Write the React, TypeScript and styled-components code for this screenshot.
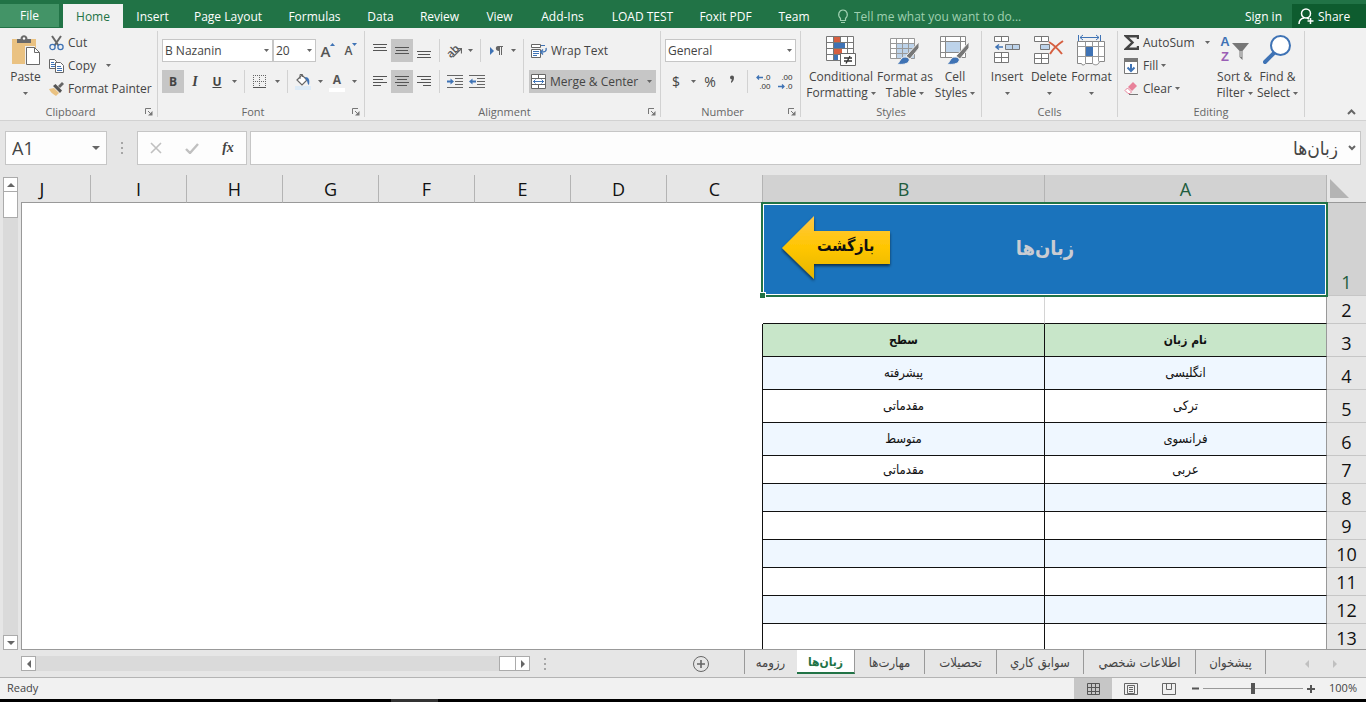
import React from "react";
import styled, { createGlobalStyle, css } from "styled-components";

const uiFont = `"Open Sans", "Noto Sans", sans-serif`;
const faFont = `"DejaVu Sans Condensed", "DejaVu Sans", sans-serif`;

const GlobalStyle = createGlobalStyle`
  *, *::before, *::after { box-sizing: border-box; }
  body { margin: 0; background: #e6e6e6; font-family: ${uiFont}; font-size: 12px; color: #444; }
  button, input, select { font: inherit; color: inherit; margin: 0; }
  button { border: 0; padding: 0; background: none; cursor: pointer; }
`;

const Window = styled.div`
  display: flex;
  flex-direction: column;
  height: 100vh;
  min-width: 1320px;
  overflow: hidden;
`;

/* ---------- Tab strip ---------- */

const TabStrip = styled.header`
  display: flex;
  align-items: stretch;
  height: 28px;
  flex: none;
  padding-top: 4px;
  background: #217346;
  color: #fff;
`;

const FileTab = styled.button`
  width: 59px;
  height: 24px;
  margin-right: 4px;
  background: #439467;
  border-bottom: 1px solid #217346;
`;

const RibbonTab = styled.button<{ $w: number; $active?: boolean }>`
  width: ${(p) => p.$w}px;
  white-space: nowrap;
  ${(p) => p.$active && css`background: #f1f1f1; color: #217346;`}
`;

const TellMe = styled.label`
  display: flex;
  align-items: center;
  gap: 5px;
  flex: 1;
  padding-left: 14px;
  color: #9fd0b0;
`;

const TellMeInput = styled.input`
  width: 200px;
  border: 0;
  padding: 0;
  outline: 0;
  background: none;
  &::placeholder { color: #9fd0b0; opacity: 1; }
`;

const SignIn = styled.a`
  align-self: center;
  color: #fff;
  text-decoration: none;
  margin-right: 10px;
`;

const Share = styled.button`
  display: flex;
  align-items: center;
  gap: 4px;
  width: 74px;
  padding-left: 6px;
  background: #0e5c2f;
`;

/* ---------- Ribbon ---------- */

const Ribbon = styled.section`
  display: flex;
  height: 93px;
  flex: none;
  background: #f1f1f1;
  border-bottom: 1px solid #d2d2d2;
`;

const GroupBox = styled.section<{ $w: number }>`
  display: flex;
  flex-direction: column;
  width: ${(p) => p.$w}px;
  flex: none;
  border-right: 1px solid transparent;
  border-image: linear-gradient(to bottom, transparent 4px, #d2d2d2 4px, #d2d2d2 88px, transparent 88px) 1;
`;

const GroupBody = styled.div`
  display: flex;
  flex: 1;
  padding: 0 4px;
`;

const GroupFoot = styled.footer`
  display: flex;
  align-items: center;
  height: 16px;
  padding: 0 4px;
  color: #666;
`;

const GroupName = styled.h2<{ $launch?: boolean }>`
  flex: 1;
  margin: 0;
  padding-right: ${(p) => (p.$launch ? 8 : 0)}px;
  font-size: 11px;
  font-weight: 400;
  line-height: 16px;
  text-align: center;
`;

const PlainButton = styled.button`
  display: flex;
`;

const Rows = styled.div`
  display: flex;
  flex-direction: column;
  gap: 8px;
  padding-top: 11px;
`;

const Row = styled.div`
  display: flex;
  align-items: stretch;
  height: 23px;
`;

const Tool = styled.button<{ $w?: number; $on?: boolean }>`
  display: flex;
  align-items: center;
  justify-content: center;
  width: ${(p) => p.$w ?? 22}px;
  flex: none;
  background: ${(p) => (p.$on ? "#c6c6c6" : "none")};
`;

const Glyph = styled.span<{ $size?: number; $bold?: boolean }>`
  font-size: ${(p) => p.$size ?? 14}px;
  font-weight: ${(p) => (p.$bold ? 700 : 400)};
  line-height: 20px;
`;

const Italic = styled(Glyph)`
  font-family: "Liberation Serif", serif;
  font-style: italic;
`;

const Underline = styled(Glyph)`
  text-decoration: underline;
`;

const SizeMark = styled.span<{ $size: number }>`
  display: flex;
  align-items: flex-start;
  font-size: ${(p) => p.$size}px;
  font-weight: 600;
  line-height: 20px;
  color: #555;
  svg { margin-top: 2px; }
`;

const InkMark = styled.span`
  display: flex;
  flex-direction: column;
  align-items: center;
  width: 16px;
  font-weight: 700;
  line-height: 17px;
  color: #555;
  border-bottom: 4px solid #fff;
`;

const SlantMark = styled.span`
  display: flex;
  align-items: center;
  font-size: 11px;
  line-height: 16px;
  font-weight: 600;
  color: #555;
  i { font-style: normal; transform: rotate(-45deg); }
  svg { margin: 4px 0 0 -7px; }
`;

const LetterPair = styled.span`
  display: flex;
  flex-direction: column;
  font-family: "Liberation Sans", sans-serif;
  font-size: 13px;
  font-weight: 700;
  line-height: 15px;
  color: #3f73b5;
  span + span { color: #9a5fb5; }
`;

const SortMark = styled.span`
  display: flex;
  align-items: flex-start;
  gap: 2px;
`;

const Divider = styled.span<{ $tall?: boolean }>`
  width: 1px;
  margin: ${(p) => (p.$tall ? "11px 5px 0 4px" : "0 4px")};
  height: ${(p) => (p.$tall ? "54px" : "auto")};
  background: #d2d2d2;
`;

const SelectBox = styled.span<{ $w: number }>`
  position: relative;
  width: ${(p) => p.$w}px;
  svg { position: absolute; right: 4px; top: 10px; pointer-events: none; }
  & + & select { border-left: 0; }
`;

const Select = styled.select`
  appearance: none;
  width: 100%;
  height: 23px;
  padding: 0 14px 0 2px;
  border: 1px solid #c6c6c6;
  border-radius: 0;
  background: #fff;
`;

const LabelTool = styled.button<{ $on?: boolean }>`
  display: flex;
  align-items: center;
  gap: 4px;
  width: 127px;
  height: 23px;
  padding-left: 2px;
  white-space: nowrap;
  background: ${(p) => (p.$on ? "#c6c6c6" : "none")};
  svg:last-child:not(:first-child) { margin-left: auto; margin-right: 4px; }
`;

const SmallStack = styled.div<{ $w?: number }>`
  display: flex;
  flex-direction: column;
  width: ${(p) => (p.$w ? `${p.$w}px` : "auto")};
  padding: 3px 0 0 2px;
`;

const SmallTool = styled.button<{ $gap?: number }>`
  display: flex;
  align-items: center;
  height: 23px;
  white-space: nowrap;
  svg:first-child { margin-right: 4px; }
  svg:last-child:not(:first-child) { margin-left: ${(p) => p.$gap ?? 3}px; }
`;

const BigButton = styled.button<{ $w: number }>`
  display: flex;
  flex-direction: column;
  align-items: center;
  width: ${(p) => p.$w}px;
  padding-top: 6px;
  line-height: 16px;
  white-space: nowrap;
`;

const BigIcon = styled.span`
  display: flex;
  height: 35px;
`;

const BigLine = styled.span`
  display: flex;
  align-items: center;
  gap: 3px;
  height: 16px;
`;

const RibbonEnd = styled.div`
  display: flex;
  flex: 1;
  align-items: flex-end;
  justify-content: flex-end;
  padding: 0 10px 5px 0;
`;

/* ---------- Formula bar ---------- */

const FormulaBar = styled.div`
  display: flex;
  height: 54px;
  flex: none;
  padding: 10px 5px;
`;

const NameBox = styled.label`
  display: flex;
  align-items: center;
  width: 102px;
  padding-right: 6px;
  border: 1px solid #c6c6c6;
  background: #fdfdfd;
`;

const NameInput = styled.input`
  flex: 1;
  min-width: 0;
  border: 0;
  padding: 0 6px;
  background: none;
  font-size: 18px;
`;

const Dots = styled.span`
  display: flex;
  flex-direction: column;
  justify-content: center;
  align-items: center;
  gap: 3px;
  width: 30px;
  i { width: 2px; height: 2px; background: #a6a6a6; }
`;

const FormulaActions = styled.div`
  display: flex;
  width: 110px;
  margin-right: 3px;
  border: 1px solid #c6c6c6;
  background: #fdfdfd;
`;

const FormulaField = styled.label`
  display: flex;
  flex: 1;
  align-items: center;
  padding-right: 4px;
  border: 1px solid #c6c6c6;
  background: #fdfdfd;
`;

const FormulaInput = styled.input`
  flex: 1;
  border: 0;
  padding: 0 10px;
  background: none;
  font-family: ${faFont};
  font-size: 19px;
`;

/* ---------- Sheet ---------- */

const SheetArea = styled.main`
  display: flex;
  flex: 1 1 0;
  min-height: 0;
`;

const VScroll = styled.div`
  display: flex;
  flex-direction: column;
  width: 15px;
  margin: 2px 3px 0;
  background: #dadada;
`;

const ScrollButton = styled.button`
  display: flex;
  align-items: center;
  justify-content: center;
  width: 15px;
  height: 15px;
  border: 1px solid #ababab;
  background: #fff;
`;

const VThumb = styled.div`
  height: 27px;
  margin-top: -1px;
  border: 1px solid #ababab;
  background: #fff;
`;

const Spring = styled.span`
  flex: 1;
`;

const SheetClip = styled.div`
  flex: 1;
  min-width: 0;
  overflow: hidden;
  border-bottom: 1px solid #999;
`;

const Sheet = styled.table`
  width: 100%;
  table-layout: fixed;
  border-collapse: separate;
  border-spacing: 0;
`;

const Corner = styled.th`
  padding: 0;
  border-bottom: 1px solid #999;
  vertical-align: middle;
  svg { display: block; margin-right: 16px; }
`;

const ColHead = styled.th<{ $selected?: boolean }>`
  height: 28px;
  padding: 0;
  overflow: hidden;
  border-right: 1px solid #b4b4b4;
  border-bottom: 1px solid #999;
  font-size: 18px;
  font-weight: 400;
  line-height: 26px;
  color: ${(p) => (p.$selected ? "#215c3e" : "#111")};
  background: ${(p) => (p.$selected ? "#d2d2d2" : "#e6e6e6")};
`;

const ClippedLetter = styled.span`
  display: block;
  width: 96px;
  text-align: center;
`;

const RowHead = styled.th<{ $selected?: boolean }>`
  padding: 0 0 1px;
  border-bottom: 1px solid #c6c6c6;
  font-size: 18px;
  font-weight: 400;
  line-height: 24px;
  vertical-align: bottom;
  text-align: center;
  color: ${(p) => (p.$selected ? "#215c3e" : "#111")};
  background: ${(p) => (p.$selected ? "#d2d2d2" : "#e6e6e6")};
`;

const SheetRow = styled.tr<{ $h: number }>`
  height: ${(p) => p.$h}px;
`;

const edge = "1px solid #111";

const Cell = styled.td<{ $tone: "head" | "odd" | "plain" | "none"; $first?: boolean }>`
  padding: 0;
  font-family: ${faFont};
  font-size: ${(p) => (p.$tone === "head" ? 12 : 13)}px;
  line-height: 20px;
  font-weight: ${(p) => (p.$tone === "head" ? 700 : 400)};
  text-align: center;
  vertical-align: middle;
  color: #111;
  border-bottom: ${edge};
  border-right: ${(p) => (p.$first ? "1px solid #999" : p.$tone === "none" ? "1px solid #d4d4d4" : edge)};
  background: ${(p) => ({ head: "#c8e6c9", odd: "#eff7ff", plain: "#fff", none: "#fff" })[p.$tone]};
`;

const BlankCell = styled.td<{ $edge?: boolean }>`
  padding: 0;
  background: #fff;
  border-left: 1px solid #999;
  border-right: 1px solid ${(p) => (p.$edge ? "#111" : "#fff")};
`;

const TitleCell = styled.td`
  position: relative;
  padding: 0 0 4px;
  background: #1a73bc;
  color: #c9ccd2;
  font-family: ${faFont};
  font-size: 20px;
  font-weight: 700;
  text-align: center;
`;

const Selection = styled.span`
  position: absolute;
  inset: -1px -1px -1px -2px;
  border: 2px solid #217346;
  box-shadow: inset 0 0 0 1px #fff;
  pointer-events: none;
  &::after {
    content: "";
    position: absolute;
    left: -4px;
    bottom: -4px;
    width: 7px;
    height: 7px;
    border: 1px solid #fff;
    background: #217346;
  }
`;

const BackShape = styled.a`
  position: absolute;
  left: 18px;
  top: 10px;
  width: 112px;
  height: 72px;
  color: #111;
  svg { position: absolute; left: 0; top: 0; }
  span {
    position: absolute;
    left: 36px;
    top: 22px;
    font-size: 16px;
    line-height: 22px;
  }
`;

/* ---------- Sheet tabs ---------- */

const SheetBar = styled.nav`
  display: flex;
  height: 28px;
  flex: none;
  border-bottom: 1px solid #b4b4b4;
`;

const HScroll = styled.div`
  display: flex;
  flex: 1;
  height: 15px;
  margin: 6px 0 0 21px;
  background: #dadada;
`;

const HThumb = styled.div`
  width: 17px;
  margin-right: -1px;
  border: 1px solid #ababab;
  background: #fff;
`;

const AddSheet = styled.button`
  display: flex;
  align-items: center;
  margin: 0 34px 0 132px;
`;

const SheetTabs = styled.div`
  display: flex;
  flex-direction: row-reverse;
  border-left: 1px solid #999;
  height: 24px;
`;

const SheetTab = styled.button<{ $w: number; $active?: boolean; $bare?: boolean }>`
  width: ${(p) => p.$w}px;
  height: 24px;
  padding-top: 2px;
  font-family: ${faFont};
  font-size: 13px;
  line-height: 20px;
  white-space: nowrap;
  border-right: 1px solid ${(p) => (p.$bare ? "transparent" : "#999")};
  ${(p) =>
    p.$active &&
    css`
      background: #fff;
      color: #217346;
      font-weight: 700;
      font-size: 12px;
      border-bottom: 2px solid #217346;
    `}
`;

const TabNav = styled.div`
  display: flex;
  width: 100px;
  padding-left: 27px;
`;

/* ---------- Status bar ---------- */

const StatusBar = styled.footer`
  display: flex;
  align-items: stretch;
  height: 21px;
  flex: none;
  padding: 0 9px 0 7px;
  background: #f1f1f1;
  font-size: 11px;
  line-height: 20px;
`;

const Zoom = styled.input`
  appearance: none;
  align-self: center;
  width: 100px;
  height: 11px;
  background: linear-gradient(#999, #999) center / 100% 1px no-repeat;
  &::-webkit-slider-thumb {
    appearance: none;
    width: 4px;
    height: 11px;
    background: #555;
  }
`;

const ZoomValue = styled.output`
  width: 38px;
  text-align: right;
`;

const Taskbar = styled.div`
  height: 3px;
  flex: none;
  padding-left: 391px;
  background: #000;
  &::before { content: ""; display: block; width: 47px; height: 3px; background: #333; }
`;

/* ---------- Icons ---------- */

type IconProps = { w: number; h: number; children: React.ReactNode };
const Icon = ({ w, h, children }: IconProps) => (
  <svg width={w} height={h} viewBox={`0 0 ${w} ${h}`} fill="none" aria-hidden="true">
    {children}
  </svg>
);

const Caret = () => (
  <Icon w={5} h={3}><path d="M0 0h5L2.5 3z" fill="#666" /></Icon>
);

const CaretTool = ({ label }: { label: string }) => (
  <Tool $w={12} aria-label={label}><Caret /></Tool>
);

const Lines = ({ rows, w = 14, h = 14 }: { rows: [number, number, number][]; w?: number; h?: number }) => (
  <Icon w={w} h={h}>
    {rows.map(([x, y, len]) => <rect key={y} x={x} y={y} width={len} height="1" fill="#555" />)}
  </Icon>
);

const PasteIcon = () => (
  <Icon w={30} h={32}>
    <path d="M1 5h24v25H1z" fill="#eac282" />
    <path d="M6 9V5h3.500c0-5 7-5 7 0H20v4z" fill="#6a6a6a" />
    <circle cx="13" cy="4.500" r="1.200" fill="#fff" />
    <path d="M14 12h10v2l5 5v12H14z" fill="#f1f1f1" />
    <path d="M15.500 13.500h8l5 5v12h-13z" fill="#fff" stroke="#6a6a6a" />
    <path d="M23.500 13.500v5h5" stroke="#6a6a6a" />
  </Icon>
);

const CutIcon = () => (
  <Icon w={15} h={16}>
    <path d="M3 1l6.500 9.500M12 1L5.500 10.500" stroke="#666" strokeWidth="2" />
    <circle cx="3.500" cy="12" r="2.600" stroke="#3f73b5" strokeWidth="1.300" />
    <circle cx="11.500" cy="12" r="2.600" stroke="#3f73b5" strokeWidth="1.300" />
  </Icon>
);

const CopyIcon = () => (
  <Icon w={15} h={14}>
    <path d="M.5.5h5l2 2v7h-7z" fill="#fff" stroke="#666" />
    <path d="M2 3.500h3M2 5.500h4M2 7.500h4" stroke="#3f73b5" />
    <path d="M6.500 3.500h5l3 3v7h-8z" fill="#fff" stroke="#666" />
    <path d="M8 7.500h4M8 9.500h5M8 11.500h5" stroke="#3f73b5" />
  </Icon>
);

const PainterIcon = () => (
  <Icon w={15} h={14}>
    <path d="M0 7l5-1 5 5-3 3C4 12 1 10 0 7z" fill="#eac282" />
    <path d="M4 4l2.500-2 6.500 6.500-2 2.500z" fill="#555" />
    <path d="M9 4l4-4 2 2-4 4z" fill="#666" />
  </Icon>
);

const LauncherIcon = () => (
  <Icon w={8} h={8}>
    <path d="M.5 6V.5H6M3 3l3 3" stroke="#777" />
    <path d="M7.500 3v4.500H3z" fill="#777" />
  </Icon>
);

const SizeIcon = ({ up }: { up?: boolean }) => (
  <SizeMark $size={up ? 15 : 12}>
    A
    <Icon w={5} h={3}><path d={up ? "M0 3l2.500-3L5 3z" : "M0 0h5L2.500 3z"} fill="#3f73b5" /></Icon>
  </SizeMark>
);

const BorderIcon = () => (
  <Icon w={14} h={14}>
    <path d="M.5 0v13M6.500 0v13M12.500 0v13M0 .5h13M0 6.500h13" stroke="#666" strokeDasharray="1 1" />
    <path d="M0 12.500h13" stroke="#555" />
  </Icon>
);

const FillIcon = () => (
  <Icon w={16} h={17}>
    <rect y="13" width="16" height="4" fill="#ddebf7" />
    <path d="M2 7l5-5 5 5-5 5z" fill="#fff" stroke="#666" strokeWidth="1.200" />
    <path d="M5 6V1.500h2.500V4" stroke="#666" />
    <path d="M10 4c4 0 5 3 4 8-2-1-1-4-3-5z" fill="#3f73b5" />
  </Icon>
);

const OrientIcon = () => (
  <SlantMark>
    <i>ab</i>
    <Icon w={10} h={11}><path d="M1 10l8-8M4.500 1.500h5v5" stroke="#666" strokeWidth="1.200" /></Icon>
  </SlantMark>
);

const DirectionIcon = () => (
  <Icon w={13} h={10}>
    <path d="M0 1l4 4-4 4z" fill="#3f73b5" />
    <path d="M8 0h5v1h-1v8h-1V1h-1v8H9V5C5 5 5 0 8 0z" fill="#666" />
  </Icon>
);

const IndentIcon = ({ out }: { out?: boolean }) => (
  <Icon w={16} h={14}>
    <path d="M0 .5h16M8 3.500h8M8 6.500h8M8 9.500h8M0 12.500h16" stroke="#666" />
    <path d={out ? "M0 6.500l3.500-3v2H7v2H3.500v2z" : "M7 6.500l-3.500-3v2H0v2h3.500v2z"} fill="#3f73b5" />
  </Icon>
);

const WrapIcon = () => (
  <Icon w={16} h={16}>
    <path d="M.5 1.500h9v3h-9zM.5 6.500h9v8h-9z" fill="#fff" stroke="#666" />
    <path d="M10 2.500h4M2 8.500h6M2 10.500h6M2 12.500h4" stroke="#3f73b5" />
    <path d="M15 5c1 4-2 4-5 4m2-2.500L9.500 9l2.500 2.500" stroke="#3f73b5" strokeWidth="1.300" />
  </Icon>
);

const MergeIcon = () => (
  <Icon w={15} h={15}>
    <path d="M.5.5h14v14H.5zM.5 4.500h14M.5 10.500h14M7.500.5v4M7.500 10.500v4" fill="#fff" stroke="#666" />
    <path d="M2 7.500h11M4.500 5.500l-2 2 2 2M10.500 5.500l2 2-2 2" stroke="#3f73b5" />
  </Icon>
);

const Decimals = styled.span<{ $right?: boolean }>`
  display: grid;
  grid-template-columns: 1fr auto;
  width: 15px;
  font-family: "Liberation Sans", sans-serif;
  font-size: 8px;
  line-height: 9px;
  color: #333;
  text-align: right;
  svg { align-self: center; grid-row: ${(p) => (p.$right ? 2 : 1)}; grid-column: 1; }
  span { grid-column: 1 / -1; }
  svg + span { grid-column: 2; }
`;

const ShortArrow = ({ right }: { right?: boolean }) => (
  <Icon w={7} h={5}>
    <path d={right ? "M0 2.500h6M4 .5l2 2-2 2" : "M7 2.500H1M3 .5l-2 2 2 2"} stroke="#3f73b5" strokeWidth="1.300" />
  </Icon>
);

const ConditionalIcon = () => (
  <Icon w={31} h={32}>
    <path d="M.5 2.500h27v24H.5z" fill="#fff" />
    <path d="M8 3h6v5H8zM8 15h8v5H8z" fill="#d65f40" />
    <path d="M8 9h11v5H8zM8 21h4v5H8z" fill="#3f73b5" />
    <path d="M.5 2.500h27v24H.5zM7.500 2.500v24M14.500 2.500v6M21.500 2.500v24M.5 8.500h27M.5 14.500h27M.5 20.500h27" stroke="#777" />
    <path d="M14.500 19.500h15v12h-15z" fill="#fff" stroke="#666" />
    <path d="M18 24h8M18 27h8M24 22l-4 7.500" stroke="#333" strokeWidth="1.300" />
  </Icon>
);

const Brush = () => (
  <>
    <path d="M7 30c3-1 3-7 8-7 3 0 5 2 4 4-1 3-7 4-12 3z" fill="#3f73b5" stroke="#f1f1f1" />
    <path d="M16 22L29 8v6l-9 11z" fill="#777" stroke="#f1f1f1" />
  </>
);

const FormatTableIcon = () => (
  <Icon w={30} h={32}>
    <path d="M.5 4.500h24v20H.5z" fill="#fff" />
    <path d="M7 10h18v15H7z" fill="#bdd3ea" />
    <path d="M.5 4.500h24v20H.5zM6.500 4.500v20M12.500 4.500v20M18.500 4.500v20M.5 9.500h24M.5 14.500h24M.5 19.500h24" stroke="#999" />
    <Brush />
  </Icon>
);

const CellStylesIcon = () => (
  <Icon w={30} h={32}>
    <path d="M.5 2.500h25v21H.5zM5.500 2.500v21M20.500 2.500v21M.5 7.500h25M.5 18.500h25" fill="#fff" stroke="#888" />
    <path d="M6 8h14v10H6z" fill="#bdd3ea" />
    <Brush />
  </Icon>
);

const InsertIcon = () => (
  <Icon w={27} h={32}>
    <path d="M.5 2.500h14v5H.5zM7.500 2.500v5M.5 18.500h14v10H.5zM7.500 18.500v10M.5 23.500h14" fill="#fff" stroke="#777" />
    <path d="M11.500 10.500h14v5h-14zM18.500 10.500v5" fill="#bdd3ea" stroke="#777" />
    <path d="M9 13H2M5 10.500L2 13l3 2.500" stroke="#3f73b5" strokeWidth="1.500" />
  </Icon>
);

const DeleteIcon = () => (
  <Icon w={30} h={32}>
    <path d="M.5 2.500h14v5H.5zM7.500 2.500v5M.5 19.500h14v10H.5zM7.500 19.500v10M.5 24.500h14" fill="#fff" stroke="#777" />
    <path d="M6.500 10.500h9v5h-9z" fill="#bdd3ea" stroke="#777" />
    <path d="M15 8c5 3 9 7 13 12M29 7c-6 4-10 8-13 13" stroke="#d65f40" strokeWidth="2" />
  </Icon>
);

const FormatCellsIcon = () => (
  <Icon w={29} h={32}>
    <path d="M1.500 1v6M23.500 1v6M3 3.500h19M6 1L3 3.500 6 6M19 1l3 2.500L19 6" stroke="#3f73b5" />
    <path d="M.5 7.500h27v20h-5c-1 4-5 4-7 2h-7c-1 2-4 2-4 0h-4z" fill="#fff" stroke="#888" />
    <path d="M8.500 7.500v22M15.500 7.500v22M21.500 7.500v20M.5 12.500h27M.5 22.500h27" stroke="#999" />
    <path d="M9 13h7v9H9z" fill="#3f73b5" />
  </Icon>
);

const SumIcon = () => (
  <Icon w={15} h={15}>
    <path d="M14 4V1.200H2L8.500 7.500 2 13.800h12V11" stroke="#444" strokeWidth="2.400" />
  </Icon>
);

const FillDownIcon = () => (
  <Icon w={15} h={16}>
    <path d="M.5.5h13v15H.5z" fill="#fff" stroke="#777" />
    <path d="M0 0h14v4H0z" fill="#777" />
    <path d="M7 6v7M3.500 9.500L7 13l3.500-3.500" stroke="#3f73b5" strokeWidth="2" />
  </Icon>
);

const EraserIcon = () => (
  <Icon w={15} h={13}>
    <path d="M4 5l5-5 4 4-5 5z" fill="#e8829a" />
    <path d="M3.500 6L1 8.500 4 11.500h2L7.500 10z" fill="#fff" stroke="#e8829a" />
    <path d="M5 12.500h9" stroke="#777" />
  </Icon>
);

const SortIcon = () => (
  <SortMark>
    <LetterPair><span>A</span><span>Z</span></LetterPair>
    <Icon w={17} h={28}>
      <path d="M0 9h17l-6.500 8v9l-3-3v-6z" fill="#777" />
      <path d="M8.500 17h1v6h-1z" fill="#eee" />
    </Icon>
  </SortMark>
);

const FindIcon = () => (
  <Icon w={29} h={32}>
    <path d="M2 28l10-10" stroke="#3f73b5" strokeWidth="4" strokeLinecap="round" />
    <circle cx="17.500" cy="11.500" r="9.500" fill="#fff" stroke="#3f73b5" strokeWidth="2" />
  </Icon>
);

const Tri = ({ d, w = 7, h = 7, color = "#666" }: { d: string; w?: number; h?: number; color?: string }) => (
  <Icon w={w} h={h}><path d={d} fill={color} /></Icon>
);

/* ---------- Data ---------- */

const ribbonTabs: [string, number][] = [
  ["Insert", 59], ["Page Layout", 92], ["Formulas", 81], ["Data", 51], ["Review", 67],
  ["View", 53], ["Add-Ins", 73], ["LOAD TEST", 87], ["Foxit PDF", 79], ["Team", 58],
];

type Tone = "head" | "odd" | "plain" | "none";
const rows: { n: number; h: number; tone: Tone; a?: string; b?: string }[] = [
  { n: 2, h: 28, tone: "none" },
  { n: 3, h: 33, tone: "head", a: "نام زبان", b: "سطح" },
  { n: 4, h: 33, tone: "odd", a: "انگلیسی", b: "پیشرفته" },
  { n: 5, h: 33, tone: "plain", a: "ترکی", b: "مقدماتی" },
  { n: 6, h: 33, tone: "odd", a: "فرانسوی", b: "متوسط" },
  { n: 7, h: 28, tone: "plain", a: "عربی", b: "مقدماتی" },
  { n: 8, h: 28, tone: "odd" },
  { n: 9, h: 28, tone: "plain" },
  { n: 10, h: 28, tone: "odd" },
  { n: 11, h: 28, tone: "plain" },
  { n: 12, h: 28, tone: "odd" },
  { n: 13, h: 28, tone: "plain" },
];

const languages = "زبان\u200cها";

const sheetTabs: { name: string; w: number; active?: boolean; bare?: boolean }[] = [
  { name: "پیشخوان", w: 70 },
  { name: "اطلاعات شخصي", w: 112 },
  { name: "سوابق كاري", w: 87 },
  { name: "تحصيلات", w: 72 },
  { name: "مهارت\u200cها", w: 70 },
  { name: languages, w: 58, active: true },
  { name: "رزومه", w: 52, bare: true },
];

const Group = ({ name, w, launch, children }: { name: string; w: number; launch?: boolean; children: React.ReactNode }) => (
  <GroupBox $w={w} aria-label={name}>
    <GroupBody>{children}</GroupBody>
    <GroupFoot>
      <GroupName $launch={launch}>{name}</GroupName>
      {launch && <PlainButton aria-label={`${name} settings`}><LauncherIcon /></PlainButton>}
    </GroupFoot>
  </GroupBox>
);

const Big = ({ w, icon, top, bottom }: { w: number; icon: React.ReactNode; top: string; bottom?: string }) => (
  <BigButton $w={w}>
    <BigIcon>{icon}</BigIcon>
    <BigLine>{top}</BigLine>
    <BigLine>{bottom}<Caret /></BigLine>
  </BigButton>
);

const DotColumn = () => <Dots><i /><i /><i /></Dots>;

export default function App() {
  return (
    <Window>
      <GlobalStyle />
      <TabStrip>
        <FileTab>File</FileTab>
        <RibbonTab $w={60} $active>Home</RibbonTab>
        {ribbonTabs.map(([name, w]) => <RibbonTab key={name} $w={w}>{name}</RibbonTab>)}
        <TellMe>
          <Icon w={12} h={15}>
            <path d="M3.500 9.500C0 6 2 1 6 1s6 5 2.500 8.500v2h-5zM4 13.500h4" stroke="#9fd0b0" strokeWidth="1.200" />
          </Icon>
          <TellMeInput aria-label="Tell me" placeholder="Tell me what you want to do..." />
        </TellMe>
        <SignIn href="#signin">Sign in</SignIn>
        <Share>
          <Icon w={16} h={17}>
            <circle cx="8" cy="5.500" r="4.500" stroke="#fff" strokeWidth="1.500" />
            <path d="M1 16c0-3 2-5.500 5-6M9 10l2 1M12.500 10v6M9.500 13h6" stroke="#fff" strokeWidth="1.500" />
          </Icon>
          Share
        </Share>
      </TabStrip>

      <Ribbon>
        <Group name="Clipboard" w={158} launch>
          <Big w={43} icon={<PasteIcon />} top="Paste" />
          <SmallStack>
            <SmallTool><CutIcon />Cut</SmallTool>
            <SmallTool $gap={10}><CopyIcon />Copy<Caret /></SmallTool>
            <SmallTool><PainterIcon />Format Painter</SmallTool>
          </SmallStack>
        </Group>

        <Group name="Font" w={207} launch>
          <Rows>
            <Row>
              <SelectBox $w={111}>
                <Select aria-label="Font"><option>B Nazanin</option></Select><Caret />
              </SelectBox>
              <SelectBox $w={43}>
                <Select aria-label="Font size"><option>20</option></Select><Caret />
              </SelectBox>
              <Tool $w={24} aria-label="Increase font size"><SizeIcon up /></Tool>
              <Tool aria-label="Decrease font size"><SizeIcon /></Tool>
            </Row>
            <Row>
              <Tool $on><Glyph $bold $size={12}>B</Glyph></Tool>
              <Tool><Italic $bold>I</Italic></Tool>
              <Tool><Underline $bold $size={12}>U</Underline></Tool>
              <CaretTool label="Underline styles" />
              <Divider />
              <Tool aria-label="Borders"><BorderIcon /></Tool>
              <CaretTool label="Border styles" />
              <Divider />
              <Tool aria-label="Fill color"><FillIcon /></Tool>
              <CaretTool label="Fill colors" />
              <Tool aria-label="Font color"><InkMark>A</InkMark></Tool>
              <CaretTool label="Font colors" />
            </Row>
          </Rows>
        </Group>

        <Group name="Alignment" w={296} launch>
          <Rows>
            <Row>
              <Tool aria-label="Top align"><Lines rows={[[0, 0, 14], [1, 3, 12], [0, 6, 14]]} /></Tool>
              <Tool $on aria-label="Middle align"><Lines rows={[[0, 3, 14], [1, 6, 12], [0, 9, 14]]} /></Tool>
              <Tool aria-label="Bottom align"><Lines rows={[[0, 7, 14], [1, 10, 12], [0, 13, 14]]} /></Tool>
              <Divider />
              <Tool $w={20} aria-label="Orientation"><OrientIcon /></Tool>
              <CaretTool label="Orientations" />
              <Divider />
              <Tool aria-label="Text direction"><DirectionIcon /></Tool>
              <CaretTool label="Text directions" />
            </Row>
            <Row>
              <Tool aria-label="Align left"><Lines rows={[[0, 1, 14], [0, 4, 10], [0, 7, 14], [0, 10, 8]]} /></Tool>
              <Tool $on aria-label="Center"><Lines rows={[[0, 1, 14], [2, 4, 10], [0, 7, 14], [2, 10, 10]]} /></Tool>
              <Tool aria-label="Align right"><Lines rows={[[0, 1, 14], [4, 4, 10], [0, 7, 14], [6, 10, 8]]} /></Tool>
              <Divider />
              <Tool aria-label="Increase indent"><IndentIcon /></Tool>
              <Tool aria-label="Decrease indent"><IndentIcon out /></Tool>
            </Row>
          </Rows>
          <Divider $tall />
          <Rows>
            <LabelTool><WrapIcon />Wrap Text</LabelTool>
            <LabelTool $on><MergeIcon />Merge &amp; Center<Caret /></LabelTool>
          </Rows>
        </Group>

        <Group name="Number" w={140} launch>
          <Rows>
            <Row>
              <SelectBox $w={131}>
                <Select aria-label="Number format"><option>General</option></Select><Caret />
              </SelectBox>
            </Row>
            <Row>
              <Tool><Glyph $size={14}>$</Glyph></Tool>
              <CaretTool label="Currencies" />
              <Tool><Glyph $size={14}>%</Glyph></Tool>
              <Tool aria-label="Comma style">
                <Icon w={5} h={14}><path d="M0 2.500a2 2 0 1 1 4 0C4 5 3 7 1 8V6.500L2 4.500C1 4.500 0 3.500 0 2.500z" fill="#555" /></Icon>
              </Tool>
              <Divider />
              <Tool aria-label="Increase decimal"><Decimals><ShortArrow /><span>.0</span><span>.00</span></Decimals></Tool>
              <Tool aria-label="Decrease decimal"><Decimals $right><span>.00</span><ShortArrow right /><span>.0</span></Decimals></Tool>
            </Row>
          </Rows>
        </Group>

        <Group name="Styles" w={181}>
          <Big w={72} icon={<ConditionalIcon />} top="Conditional" bottom="Formatting" />
          <Big w={56} icon={<FormatTableIcon />} top="Format as" bottom="Table" />
          <Big w={44} icon={<CellStylesIcon />} top="Cell" bottom="Styles" />
        </Group>

        <Group name="Cells" w={136}>
          <Big w={42} icon={<InsertIcon />} top="Insert" />
          <Big w={42} icon={<DeleteIcon />} top="Delete" />
          <Big w={43} icon={<FormatCellsIcon />} top="Format" />
        </Group>

        <Group name="Editing" w={187}>
          <SmallStack $w={91}>
            <SmallTool $gap={10}><SumIcon />AutoSum<Caret /></SmallTool>
            <SmallTool><FillDownIcon />Fill<Caret /></SmallTool>
            <SmallTool><EraserIcon />Clear<Caret /></SmallTool>
          </SmallStack>
          <Big w={43} icon={<SortIcon />} top="Sort &" bottom="Filter" />
          <Big w={43} icon={<FindIcon />} top="Find &" bottom="Select" />
        </Group>

        <RibbonEnd>
          <PlainButton aria-label="Collapse the ribbon">
            <Icon w={9} h={6}><path d="M1 5l3.500-3.500L8 5" stroke="#666" strokeWidth="2" /></Icon>
          </PlainButton>
        </RibbonEnd>
      </Ribbon>

      <FormulaBar>
        <NameBox>
          <NameInput aria-label="Name box" defaultValue="A1" />
          <Tri d="M0 0h8L4 4z" w={8} h={4} />
        </NameBox>
        <DotColumn />
        <FormulaActions>
          <Tool $w={36} aria-label="Cancel">
            <Icon w={12} h={12}><path d="M1 1l10 10M11 1L1 11" stroke="#c0c0c0" strokeWidth="1.600" /></Icon>
          </Tool>
          <Tool $w={36} aria-label="Enter">
            <Icon w={14} h={11}><path d="M1 6l4 4 8-9" stroke="#c0c0c0" strokeWidth="2.400" /></Icon>
          </Tool>
          <Tool $w={36} aria-label="Insert function"><Italic $bold>fx</Italic></Tool>
        </FormulaActions>
        <FormulaField>
          <FormulaInput aria-label="Formula" dir="rtl" defaultValue={languages} />
          <Icon w={8} h={6}><path d="M1 1l3 3 3-3" stroke="#666" strokeWidth="2" /></Icon>
        </FormulaField>
      </FormulaBar>

      <SheetArea>
        <VScroll>
          <ScrollButton aria-label="Scroll up"><Tri d="M0 4h8L4 0z" w={8} h={4} /></ScrollButton>
          <VThumb />
          <Spring />
          <ScrollButton aria-label="Scroll down"><Tri d="M0 0h8L4 4z" w={8} h={4} /></ScrollButton>
        </VScroll>
        <SheetClip>
          <Sheet dir="rtl">
            <colgroup>
              <col width="39" />
              <col width="282" />
              <col width="282" />
              {"CDEFGHI".split("").map((c) => <col key={c} width="96" />)}
              <col />
            </colgroup>
            <thead>
              <tr>
                <Corner aria-label="Select all">
                  <Icon w={20} h={20}><path d="M0 0l19 19H0z" fill="#b4b4b4" /></Icon>
                </Corner>
                <ColHead $selected>A</ColHead>
                <ColHead $selected>B</ColHead>
                {"CDEFGHI".split("").map((c) => <ColHead key={c}>{c}</ColHead>)}
                <ColHead><ClippedLetter>J</ClippedLetter></ColHead>
              </tr>
            </thead>
            <tbody>
              <SheetRow $h={93}>
                <RowHead $selected>1</RowHead>
                <TitleCell colSpan={2}>
                  {languages}
                  <Selection />
                  <BackShape href="#back">
                    <svg width="116" height="74" viewBox="0 0 116 74" aria-hidden="true">
                      <defs>
                        <linearGradient id="gold" x1="0" y1="0" x2="0" y2="1">
                          <stop offset="0" stopColor="#ffc746" />
                          <stop offset="0.500" stopColor="#ffc600" />
                          <stop offset="1" stopColor="#e5b600" />
                        </linearGradient>
                        <filter id="soft" x="-10%" y="-10%" width="120%" height="125%">
                          <feDropShadow dx="0" dy="2" stdDeviation="1.500" floodColor="#000" floodOpacity="0.600" />
                        </filter>
                      </defs>
                      <path d="M1 35L33 3v15h76v33H33v15z" fill="url(#gold)" filter="url(#soft)" />
                    </svg>
                    <span>بازگشت</span>
                  </BackShape>
                </TitleCell>
                <BlankCell colSpan={8} />
              </SheetRow>
              {rows.map((r) => (
                <SheetRow key={r.n} $h={r.h}>
                  <RowHead>{r.n}</RowHead>
                  <Cell $tone={r.tone} $first>{r.a}</Cell>
                  <Cell $tone={r.tone}>{r.b}</Cell>
                  <BlankCell colSpan={8} $edge={r.tone !== "none"} />
                </SheetRow>
              ))}
            </tbody>
          </Sheet>
        </SheetClip>
      </SheetArea>

      <SheetBar>
        <HScroll>
          <ScrollButton aria-label="Scroll left"><Tri d="M4 0v8L0 4z" w={4} h={8} /></ScrollButton>
          <Spring />
          <HThumb />
          <ScrollButton aria-label="Scroll right"><Tri d="M0 0v8l4-4z" w={4} h={8} /></ScrollButton>
        </HScroll>
        <DotColumn />
        <AddSheet aria-label="New sheet">
          <Icon w={18} h={18}>
            <circle cx="9" cy="9" r="7.500" stroke="#666" />
            <path d="M9 5v8M5 9h8" stroke="#666" strokeWidth="1.600" />
          </Icon>
        </AddSheet>
        <SheetTabs>
          {sheetTabs.map((t) => (
            <SheetTab key={t.name} $w={t.w} $active={t.active} $bare={t.bare}>{t.name}</SheetTab>
          ))}
        </SheetTabs>
        <TabNav>
          <Tool $w={28} aria-label="Previous sheets"><Tri d="M4 0v8L0 4z" w={4} h={8} color="#c0c0c0" /></Tool>
          <Tool $w={28} aria-label="Next sheets"><Tri d="M0 0v8l4-4z" w={4} h={8} color="#c0c0c0" /></Tool>
        </TabNav>
      </SheetBar>

      <StatusBar>
        Ready
        <Spring />
        <Tool $w={38} $on aria-label="Normal view">
          <Icon w={13} h={12}><path d="M.5.5h12v11H.5zM4.500.5v11M8.500.5v11M.5 4.500h12M.5 8.500h12" stroke="#555" /></Icon>
        </Tool>
        <Tool $w={38} aria-label="Page layout view">
          <Icon w={14} h={12}><path d="M.5.5h13v11H.5zM3.500 2.500h7v8h-7zM5 4.500h4M5 6.500h4M5 8.500h4" stroke="#666" /></Icon>
        </Tool>
        <Tool $w={38} aria-label="Page break preview">
          <Icon w={14} h={12}><path d="M.5.5h13v11H.5zM4.500.5v6h5v-6" stroke="#666" /></Icon>
        </Tool>
        <Tool $w={15} aria-label="Zoom out"><Icon w={7} h={7}><path d="M0 3.500h7" stroke="#555" strokeWidth="2" /></Icon></Tool>
        <Zoom type="range" aria-label="Zoom" defaultValue={50} />
        <Tool $w={16} aria-label="Zoom in"><Icon w={8} h={8}><path d="M0 4h8M4 0v8" stroke="#555" strokeWidth="2" /></Icon></Tool>
        <ZoomValue>100%</ZoomValue>
      </StatusBar>
      <Taskbar />
    </Window>
  );
}
